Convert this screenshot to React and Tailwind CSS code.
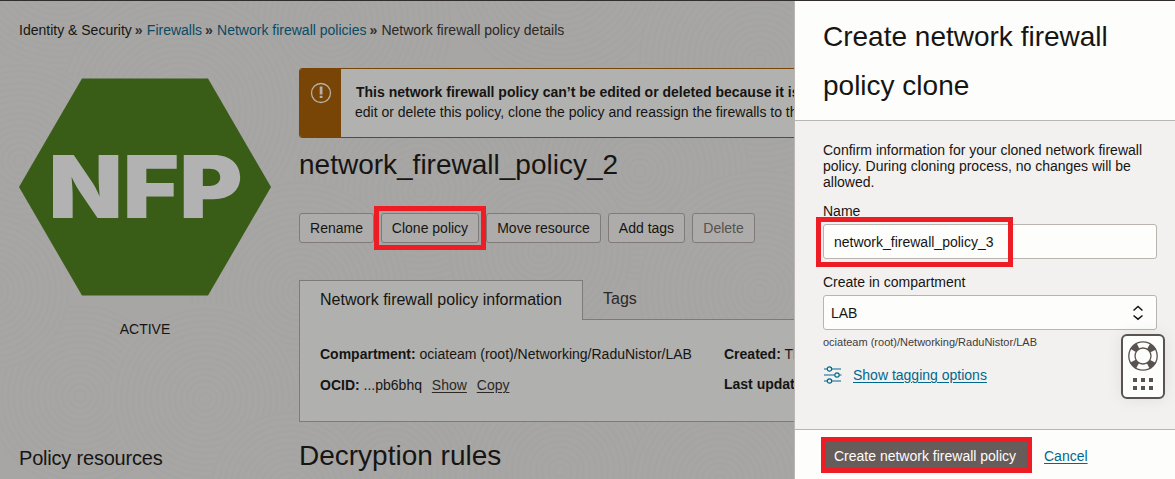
const swirls = [
  [60, -40, 110], [330, 20, 120], [560, -30, 110], [760, 60, 120], [180, 110, 120], [20, 160, 100],
  [420, 190, 130], [640, 170, 110], [300, 290, 110], [540, 250, 90], [760, 290, 120], [80, 395, 95],
  [205, 398, 95], [390, 470, 120], [560, 470, 100], [720, 480, 90], [-10, 290, 80], [290, 490, 80],
];

function Swirls() {
  return (
    <svg className="absolute inset-0" width="794" height="478" aria-hidden="true">
      {swirls.map(([x, y, r], i) => (
        <g key={i}>
          <circle cx={x} cy={y} r={r} fill="#a7a6a4" />
          {Array.from({ length: Math.floor(r / 6) }, (_, k) => (
            <circle key={k} cx={x} cy={y} r={(k + 1) * 6} fill="none" stroke="#a4a4a2" strokeWidth="2" />
          ))}
        </g>
      ))}
    </svg>
  );
}

function Sep() {
  return <span className="w-[15px] pl-[3px] text-[14px] font-bold text-[#33302e]">»</span>;
}

function Btn({ children, className, highlight }) {
  return (
    <div className={`relative flex h-[30px] items-center justify-center rounded-[3px] border border-[#807b78] bg-[#adacaa] ${className}`}>
      <span className="whitespace-nowrap text-[14px] leading-5">{children}</span>
      {highlight && <div className="absolute -left-[8px] -top-[8px] z-10 h-[44px] w-[112px] border-5 border-[#ee1c25]" />}
    </div>
  );
}

function PolicyPage() {
  return (
    <main className="relative h-full w-[794px] shrink-0 overflow-hidden bg-[#a7a6a4] text-[#161513]">
      <Swirls />
      <div className="relative w-[1200px]">
        <nav className="flex h-[67px] items-start pl-[19px] pt-[19px] text-[14px] leading-5">
          <span>Identity &amp; Security</span>
          <Sep />
          <span className="text-[#0b4a63]">Firewalls</span>
          <Sep />
          <span className="text-[#0b4a63]">Network firewall policies</span>
          <Sep />
          <span className="text-[#2b2826]">Network firewall policy details</span>
        </nav>
        <div className="flex pl-[19px]">
          <aside className="w-[280px] shrink-0 pt-[10px]">
            <svg width="252" height="218" viewBox="0 0 252 218">
              <polygon points="63,0.500 189,0.500 252,109 189,217.500 63,217.500 0,109" fill="#395c17" />
              <text x="29.500" y="140" textLength="194" lengthAdjust="spacingAndGlyphs" fill="#b2b2b2" className="font-['Inter',sans-serif] text-[86.500px] font-black">NFP</text>
            </svg>
            <div className="mt-[23px] w-[252px] text-center text-[14px] leading-5">ACTIVE</div>
            <h3 className="mt-[105px] text-[20px] leading-7 tracking-[-0.2px]">Policy resources</h3>
          </aside>
          <section className="w-[900px]">
            <div className="flex h-[70px] overflow-hidden rounded-[3px] border border-[#784507] bg-[#b1b1af]">
              <div className="flex w-[41px] justify-center bg-[#784507] pt-[13px]">
                <svg width="22" height="22" viewBox="0 0 22 22">
                  <circle cx="11" cy="11" r="9.500" fill="none" stroke="#b5afa6" strokeWidth="1.300" />
                  <path d="M9.700 4.500h2.800v8h-2.800zM9.700 13.700h2.800v2.300h-2.800z" fill="#b5afa6" />
                </svg>
              </div>
              <div className="whitespace-nowrap pl-[14px] pt-[13px] text-[14px] leading-5">
                <p className="pl-px font-bold">This network firewall policy can’t be edited or deleted because it is</p>
                <p>edit or delete this policy, clone the policy and reassign the firewalls to the</p>
              </div>
            </div>
            <h1 className="mt-[9px] text-[28px] leading-[36px]">network_firewall_policy_2</h1>
            <div className="mt-[30px] flex gap-[7px]">
              <Btn className="w-[75px]">Rename</Btn>
              <Btn className="w-[98px]" highlight>Clone policy</Btn>
              <Btn className="w-[115px]">Move resource</Btn>
              <Btn className="w-[77px]">Add tags</Btn>
              <Btn className="w-[63px] text-[#55514f]">Delete</Btn>
            </div>
            <div className="mt-[37px] flex h-[39px] text-[16px] leading-6">
              <div className="relative z-10 -mb-px h-[40px] w-[284px] border border-b-0 border-[#7e7a78] bg-[#b0b0ae] pl-5 pt-[7px]">Network firewall policy information</div>
              <div className="pl-5 pt-[7px] text-[#2b2826]">Tags</div>
            </div>
            <div className="flex h-[103px] border border-[#7e7a78] bg-[#b0b0ae] pl-5 text-[14px] leading-5">
              <div className="w-[404px] pt-[24px]">
                <p><b>Compartment:</b> ociateam (root)/Networking/RaduNistor/LAB</p>
                <p className="mt-[11px]"><b>OCID:</b> ...pb6bhq <span className="ml-[6px] mr-[6px] text-[#2b2826] underline underline-offset-2">Show</span> <span className="text-[#2b2826] underline underline-offset-2">Copy</span></p>
              </div>
              <div className="whitespace-nowrap pt-[24px]">
                <p><b>Created:</b> Th</p>
                <p className="mt-[10px] font-bold">Last updated:</p>
              </div>
            </div>
            <h2 className="mt-[16px] text-[28px] leading-[36px]">Decryption rules</h2>
          </section>
        </div>
      </div>
    </main>
  );
}

function HelpWidget() {
  return (
    <div className="absolute left-[326px] top-[333px] flex h-[65px] w-[44px] flex-col items-center rounded-md border-2 border-[#58534f] bg-[#fdfdfc] pt-[5px] shadow-[0_0_16px_rgba(0,0,0,0.08)]">
      <svg width="30" height="30" viewBox="0 0 30 30" fill="none">
        <circle cx="15" cy="15" r="11.200" stroke="#58534f" strokeWidth="7" strokeDasharray="6.500 11.093" strokeDashoffset="-5.550" />
        <circle cx="15" cy="15" r="14.200" stroke="#58534f" strokeWidth="1.300" />
        <circle cx="15" cy="15" r="8" stroke="#58534f" strokeWidth="1.300" />
      </svg>
      <div className="mt-[7px] grid grid-cols-3 gap-1">
        {[0, 1, 2, 3, 4, 5].map((i) => <i key={i} className="size-1 bg-[#58534f]" />)}
      </div>
    </div>
  );
}

function CloneDrawer() {
  return (
    <aside className="relative flex h-full w-[381px] flex-col border-l border-[#bbb6b0] bg-[#f3f1f0] text-[#161513]">
      <header className="h-[120px] border-b border-[#b9b6b2] bg-[#fdfdfc] pl-7 pt-[11px]">
        <h2 className="w-[320px] text-[28px] leading-[49px]">Create network firewall policy clone</h2>
      </header>
      <div className="h-[308px] pl-7 pt-[21px] text-[14px]">
        <p className="w-[330px] leading-4">Confirm information for your cloned network firewall policy. During cloning process, no changes will be allowed.</p>
        <label className="mt-[11px] block leading-5">Name</label>
        <div className="relative mt-[3px] flex h-[35px] w-[334px] items-center rounded-[3px] border border-[#b9b4ad] bg-[#fdfdfc] pl-[10px] pt-[2px]">
          network_firewall_policy_3
          <div className="absolute -left-[8px] -top-[8px] h-[50px] w-[197px] border-5 border-[#ee1c25]" />
        </div>
        <label className="mt-[13px] block leading-5">Create in compartment</label>
        <div className="mt-[3px] flex h-[35px] w-[334px] items-center justify-between rounded-[3px] border border-[#b9b4ad] bg-[#fdfdfc] pl-[7px] pr-[12px]">
          <span className="pt-[2px]">LAB</span>
          <svg width="12" height="16" viewBox="0 0 12 16" fill="none" stroke="#161513" strokeWidth="1.500"><path d="M1.500 5.500L6 1.500l4.500 4M1.500 10.500l4.500 3.700 4.500-3.700" /></svg>
        </div>
        <p className="mt-1 text-[11px] leading-4 text-[#3f3b39]">ociateam (root)/Networking/RaduNistor/LAB</p>
        <div className="mt-[15px] flex items-center gap-[12px] pl-px leading-5 text-[#00688c]">
          <svg width="18" height="18" viewBox="0 0 18 18" fill="none" stroke="#00688c" strokeWidth="1.200">
            <path d="M0 3h3M8 3h9M0 9h10.500M15.500 9h2M0 15h3M8 15h9" />
            <circle cx="5.500" cy="3" r="2.200" /><circle cx="13" cy="9" r="2.200" /><circle cx="5.500" cy="15" r="2.200" />
          </svg>
          <span className="-ml-px underline underline-offset-2">Show tagging options</span>
        </div>
      </div>
      <footer className="flex h-[50px] border-t border-[#b9b6b2] bg-[#fdfdfc] pl-[26px] pt-[7px] text-[14px] leading-5">
        <div className="flex h-[36px] w-[211px] items-center border-5 border-[#ee1c25] bg-[#665c5a] pl-[8px] pt-[2px] text-[#fdfdfc]">Create network firewall policy</div>
        <span className="ml-3 mt-[9px] text-[#00688c] underline underline-offset-2">Cancel</span>
      </footer>
      <HelpWidget />
    </aside>
  );
}

export default function App() {
  return (
    <div className="flex h-[479px] w-[1175px] overflow-hidden border-t border-[#312d2a] font-['Liberation_Sans',Arial,sans-serif]">
      <PolicyPage />
      <CloneDrawer />
    </div>
  );
}
